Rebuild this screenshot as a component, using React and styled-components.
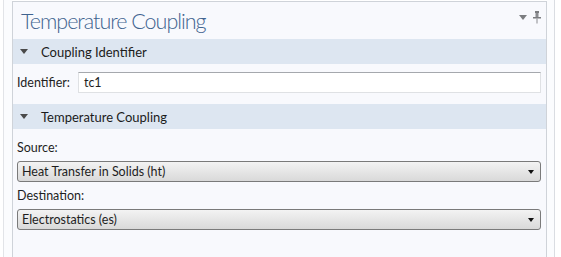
import React from "react";
import styled, { createGlobalStyle } from "styled-components";

const GlobalStyle = createGlobalStyle`
  html, body {
    margin: 0;
    padding: 0;
    background: #ffffff;
    overflow: hidden;
  }
  body {
    font-family: Lato, "Open Sans", sans-serif;
    font-size: 12.5px;
    color: #1e1e1e;
  }
`;

const Page = styled.div`
  display: flex;
  height: 257px;
  width: 561px;
`;

const LeftGutter = styled.div`
  width: 8px;
  margin-left: 3px;
  border-left: 1px solid #e2e4e8;
  background: #fbfcfe;
`;

const RightGutter = styled.div`
  width: 7px;
  border-right: 1px solid #dadde2;
  background: #fbfcfe;
`;

const Panel = styled.div`
  width: 533px;
  margin-top: 1px;
  border: 1px solid #cfd3d9;
  border-bottom: none;
  background: #f8f9fd;
  display: flex;
  flex-direction: column;
`;

const TitleBar = styled.div`
  height: 37px;
  display: flex;
  align-items: center;
  justify-content: space-between;
  padding: 0 5px 0 8px;
`;

const Title = styled.h1`
  margin: 0;
  font-family: Lato, "Open Sans", sans-serif;
  font-weight: 300;
  font-size: 21.5px;
  letter-spacing: -1px;
  color: #40638f;
`;

const TitleTools = styled.div`
  display: flex;
  align-items: center;
  gap: 6px;
  margin-top: -6px;
`;

const SectionHeader = styled.div`
  height: 25px;
  background: #dde6f1;
  display: flex;
  align-items: center;
  padding-left: 7px;
  gap: 13px;
  font-size: 13px;
  color: #1b1b1b;
`;

const Caret = styled.span`
  width: 0;
  height: 0;
  border-left: 4px solid transparent;
  border-right: 4px solid transparent;
  border-top: 5px solid ${(p) => p.$color || "#4a4a4a"};
`;

const FieldRow = styled.div`
  display: flex;
  align-items: center;
  gap: 8px;
  padding: 8px 5px 11px 4px;
`;

const Label = styled.label`
  display: block;
  color: #1e1e1e;
`;

const TextInput = styled.div`
  flex: 1;
  height: 19px;
  background: #ffffff;
  border: 1px solid #dfe1e4;
  border-top-color: #a5a8ad;
  display: flex;
  align-items: center;
  padding-left: 5px;
`;

const Stack = styled.div`
  display: flex;
  flex-direction: column;
  padding: 11px 5px 0 4px;
`;

const Select = styled.div`
  height: 19px;
  border: 1px solid #7a7a7a;
  border-radius: 3px;
  background: linear-gradient(#f3f3f3, #e6e6e6 50%, #d9d9d9);
  display: flex;
  align-items: center;
  justify-content: space-between;
  padding: 0 6px 0 4px;
  margin: 6px 0 6px;
`;

const SelectArrow = styled.span`
  width: 0;
  height: 0;
  border-left: 3.5px solid transparent;
  border-right: 3.5px solid transparent;
  border-top: 4px solid #111;
`;

const PinIcon = () => (
  <svg width="8" height="13" viewBox="0 0 8 13">
    <rect x="2" y="0" width="4" height="2" fill="#7b7d80" />
    <rect x="2.5" y="2" width="3" height="4" fill="#8a8c90" />
    <rect x="0" y="6" width="8" height="1.5" fill="#7b7d80" />
    <rect x="3.5" y="7.5" width="1" height="5" fill="#8a8c90" />
  </svg>
);

const Section = ({ title, children }) => (
  <>
    <SectionHeader>
      <Caret />
      <span>{title}</span>
    </SectionHeader>
    {children}
  </>
);

const App = () => {
  return (
    <>
      <GlobalStyle />
      <Page>
        <LeftGutter />
        <Panel>
          <TitleBar>
            <Title>Temperature Coupling</Title>
            <TitleTools>
              <Caret $color="#7b7d80" />
              <PinIcon />
            </TitleTools>
          </TitleBar>
          <Section title="Coupling Identifier">
            <FieldRow>
              <Label>Identifier:</Label>
              <TextInput>tc1</TextInput>
            </FieldRow>
          </Section>
          <Section title="Temperature Coupling">
            <Stack>
              <Label>Source:</Label>
              <Select>
                <span>Heat Transfer in Solids (ht)</span>
                <SelectArrow />
              </Select>
              <Label>Destination:</Label>
              <Select>
                <span>Electrostatics (es)</span>
                <SelectArrow />
              </Select>
            </Stack>
          </Section>
        </Panel>
        <RightGutter />
      </Page>
    </>
  );
};

export default App;
